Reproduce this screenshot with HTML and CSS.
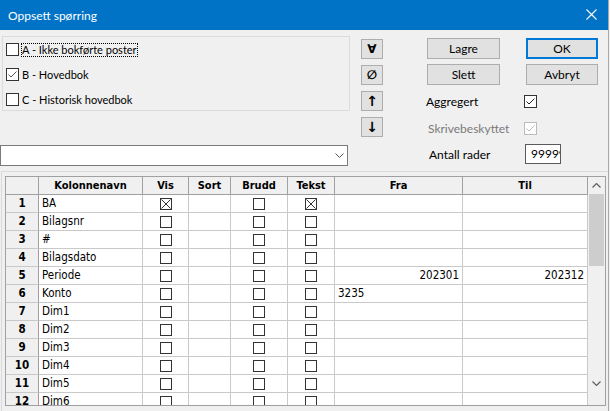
FILE: index.html
```html
<!DOCTYPE html>
<html lang="no">
<head>
<meta charset="utf-8">
<title>Oppsett spørring</title>
<link rel="stylesheet" href="styles.css">
</head>
<body>
<div class="window">
  <div class="titlebar">
    <span class="title">Oppsett spørring</span>
    <svg class="close" width="11" height="11" viewBox="0 0 11 11"><path d="M0.5 0.5 L10.5 10.5 M10.5 0.5 L0.5 10.5" stroke="#fff" stroke-width="1.1" fill="none"/></svg>
  </div>
  <div class="top">
    <div class="leftcol">
      <div class="group">
        <div class="cb-row"><span class="cb"></span><span class="cb-text focus">A - Ikke bokførte poster</span></div>
        <div class="cb-row"><span class="cb"><svg width="11" height="11" viewBox="0 0 11 11"><path d="M1.5 5.5 L4 8 L9.5 2.5" stroke="#555" stroke-width="1" fill="none"/></svg></span><span class="cb-text">B - Hovedbok</span></div>
        <div class="cb-row"><span class="cb"></span><span class="cb-text">C - Historisk hovedbok</span></div>
      </div>
      <div class="combo">
        <svg width="9" height="5" viewBox="0 0 9 5"><path d="M0.5 0.5 L4.5 4.5 L8.5 0.5" stroke="#555" stroke-width="1" fill="none"/></svg>
      </div>
    </div>
    <div class="tools">
      <button class="tool">∀</button>
      <button class="tool">∅</button>
      <button class="tool arrow">↑</button>
      <button class="tool arrow">↓</button>
    </div>
    <div class="rightcol">
      <div class="btn-grid">
        <button class="btn">Lagre</button>
        <button class="btn default">OK</button>
        <button class="btn">Slett</button>
        <button class="btn">Avbryt</button>
      </div>
      <div class="opt opt-agg"><span class="opt-label">Aggregert</span><span class="cb"><svg width="11" height="11" viewBox="0 0 11 11"><path d="M1.5 5.5 L4 8 L9.5 2.5" stroke="#222" stroke-width="1" fill="none"/></svg></span></div>
      <div class="opt opt-skr"><span class="opt-label disabled">Skrivebeskyttet</span><span class="cb cb-disabled"><svg width="11" height="11" viewBox="0 0 11 11"><path d="M1.5 5.5 L4 8 L9.5 2.5" stroke="#bcbcbc" stroke-width="1" fill="none"/></svg></span></div>
      <div class="opt opt-ant"><span class="opt-label ant">Antall rader</span><span class="input">99999</span></div>
    </div>
  </div>
  <div class="gridframe">
    <div class="grid">
      <div class="cells">
        <div class="row head">
          <div class="hc corner"></div><div class="hc">Kolonnenavn</div><div class="hc">Vis</div><div class="hc">Sort</div><div class="hc">Brudd</div><div class="hc">Tekst</div><div class="hc">Fra</div><div class="hc">Til</div>
        </div>
        <div class="row"><div class="rh">1</div><div class="c">BA</div><div class="c ck"><span class="gcb"><svg width="10" height="10" viewBox="0 0 10 10"><path d="M0.5 0.5 L9.5 9.5 M9.5 0.5 L0.5 9.5" stroke="#333" stroke-width="1" fill="none"/></svg></span></div><div class="c"></div><div class="c ck"><span class="gcb"></span></div><div class="c ck"><span class="gcb"><svg width="10" height="10" viewBox="0 0 10 10"><path d="M0.5 0.5 L9.5 9.5 M9.5 0.5 L0.5 9.5" stroke="#333" stroke-width="1" fill="none"/></svg></span></div><div class="c"></div><div class="c"></div></div>
        <div class="row"><div class="rh">2</div><div class="c">Bilagsnr</div><div class="c ck"><span class="gcb"></span></div><div class="c"></div><div class="c ck"><span class="gcb"></span></div><div class="c ck"><span class="gcb"></span></div><div class="c"></div><div class="c"></div></div>
        <div class="row"><div class="rh">3</div><div class="c">#</div><div class="c ck"><span class="gcb"></span></div><div class="c"></div><div class="c ck"><span class="gcb"></span></div><div class="c ck"><span class="gcb"></span></div><div class="c"></div><div class="c"></div></div>
        <div class="row"><div class="rh">4</div><div class="c">Bilagsdato</div><div class="c ck"><span class="gcb"></span></div><div class="c"></div><div class="c ck"><span class="gcb"></span></div><div class="c ck"><span class="gcb"></span></div><div class="c"></div><div class="c"></div></div>
        <div class="row"><div class="rh">5</div><div class="c">Periode</div><div class="c ck"><span class="gcb"></span></div><div class="c"></div><div class="c ck"><span class="gcb"></span></div><div class="c ck"><span class="gcb"></span></div><div class="c num">202301</div><div class="c num">202312</div></div>
        <div class="row"><div class="rh">6</div><div class="c">Konto</div><div class="c ck"><span class="gcb"></span></div><div class="c"></div><div class="c ck"><span class="gcb"></span></div><div class="c ck"><span class="gcb"></span></div><div class="c">3235</div><div class="c"></div></div>
        <div class="row"><div class="rh">7</div><div class="c">Dim1</div><div class="c ck"><span class="gcb"></span></div><div class="c"></div><div class="c ck"><span class="gcb"></span></div><div class="c ck"><span class="gcb"></span></div><div class="c"></div><div class="c"></div></div>
        <div class="row"><div class="rh">8</div><div class="c">Dim2</div><div class="c ck"><span class="gcb"></span></div><div class="c"></div><div class="c ck"><span class="gcb"></span></div><div class="c ck"><span class="gcb"></span></div><div class="c"></div><div class="c"></div></div>
        <div class="row"><div class="rh">9</div><div class="c">Dim3</div><div class="c ck"><span class="gcb"></span></div><div class="c"></div><div class="c ck"><span class="gcb"></span></div><div class="c ck"><span class="gcb"></span></div><div class="c"></div><div class="c"></div></div>
        <div class="row"><div class="rh">10</div><div class="c">Dim4</div><div class="c ck"><span class="gcb"></span></div><div class="c"></div><div class="c ck"><span class="gcb"></span></div><div class="c ck"><span class="gcb"></span></div><div class="c"></div><div class="c"></div></div>
        <div class="row"><div class="rh">11</div><div class="c">Dim5</div><div class="c ck"><span class="gcb"></span></div><div class="c"></div><div class="c ck"><span class="gcb"></span></div><div class="c ck"><span class="gcb"></span></div><div class="c"></div><div class="c"></div></div>
        <div class="row"><div class="rh">12</div><div class="c">Dim6</div><div class="c ck"><span class="gcb"></span></div><div class="c"></div><div class="c ck"><span class="gcb"></span></div><div class="c ck"><span class="gcb"></span></div><div class="c"></div><div class="c"></div></div>
      </div>
      <div class="scrollbar">
        <div class="sb-btn"><svg width="9" height="5" viewBox="0 0 9 5"><path d="M0.5 4.5 L4.5 0.5 L8.5 4.5" stroke="#606060" stroke-width="1.2" fill="none"/></svg></div>
        <div class="sb-track"><div class="sb-thumb"></div></div>
        <div class="sb-btn"><svg width="9" height="5" viewBox="0 0 9 5"><path d="M0.5 0.5 L4.5 4.5 L8.5 0.5" stroke="#606060" stroke-width="1.2" fill="none"/></svg></div>
        <div class="sb-corner"></div>
      </div>
    </div>
  </div>
</div>
</body>
</html>
```

FILE: styles.css
```css
* { box-sizing: border-box; }
html, body { margin: 0; padding: 0; background: #f0f0f0; }
body {
  width: 610px; height: 411px; overflow: hidden;
  font-family: Lato, "Liberation Sans", sans-serif;
  font-size: 11px; color: #000;
}
.window {
  width: 609px; height: 411px;
  border-right: 1px solid #a9a9a9;
  background: #f0f0f0;
  display: flex; flex-direction: column;
}
.titlebar {
  flex: none; height: 30px; background: #0173c6; color: #fff;
  display: flex; align-items: center; justify-content: space-between;
  padding: 0 11px 0 8px;
}
.title { font-size: 12px; }
.close { display: block; margin-top: -1px; }

.top { display: flex; flex: none; }
.leftcol { width: 350px; display: flex; flex-direction: column; }
.group {
  margin: 6px 0 0 2px; width: 348px; height: 75px;
  border: 1px solid #dcdcdc;
  padding: 6px 0 0 3px;
  display: flex; flex-direction: column; gap: 12px;
}
.cb-row { display: flex; align-items: center; height: 13px; }
.cb {
  width: 13px; height: 13px; border: 1px solid #333; background: #fff;
  flex: none; display: block;
}
.cb svg { display: block; }
.cb-disabled { border-color: #bcbcbc; }
.cb-text {
  margin-left: 2px; height: 14px; line-height: 12px;
  border: 1px solid transparent; padding: 0; white-space: nowrap;
}
.cb-text.focus { border: 1px dotted #000; }
.combo {
  margin-top: 34px; width: 348px; height: 21px;
  border: 1px solid #7a7a7a; background: #fff;
  display: flex; align-items: center; justify-content: flex-end;
  padding-right: 3px;
}
.combo svg { display: block; }

.tools {
  margin: 9px 0 0 11px; width: 22px;
  display: flex; flex-direction: column; gap: 6px;
}
.tool {
  width: 22px; height: 20px; padding: 0; margin: 0;
  border: 1px solid #adadad; background: #e1e1e1;
  font-family: "DejaVu Sans", sans-serif; font-weight: bold; font-size: 12px;
  color: #000; line-height: 18px; text-align: center;
}
.tool.arrow { font-size: 14px; }

.rightcol { margin-left: 43px; }
.btn-grid {
  margin: 8px 0 0 1px;
  display: grid; grid-template-columns: 73px 72px;
  column-gap: 26px; row-gap: 5px;
}
.btn {
  height: 21px; padding: 0; margin: 0;
  border: 1px solid #adadad; background: #e1e1e1;
  font-family: inherit; font-size: 12px; color: #000;
}
.btn.default { border: 2px solid #0078d7; }
.opt { display: flex; align-items: center; }
.opt-label { width: 98px; flex: none; white-space: nowrap; font-size: 12px; }
.opt-label.disabled { color: #7a7a7a; padding-left: 2px; }
.opt-label.ant { padding-left: 3px; width: 99px; }
.opt-agg { margin-top: 10px; height: 13px; }
.opt-skr { margin-top: 14px; height: 13px; }
.opt-ant { margin-top: 9px; height: 20px; }
.input {
  width: 36px; height: 20px; border: 1px solid #5a5a5a; background: #fff;
  overflow: hidden; white-space: nowrap; padding-left: 5px;
  font-size: 12px; line-height: 18px;
}

.gridframe {
  margin: 5px 0 0 1px; width: 607px; flex: 1;
  border-top: 1px solid #dadada; border-left: 1px solid #dadada;
  padding: 4px 0 0 3px;
}
.grid {
  width: 601px; height: 230px;
  border: 1px solid #a0a0a0; background: #fff;
  display: flex;
  font-family: "DejaVu Sans", sans-serif; font-stretch: condensed;
  font-size: 11.5px;
}
.cells { flex: 1; overflow: hidden; }
.row {
  display: grid;
  grid-template-columns: 33px 104px 46px 42px 57px 47px 128px 125px;
  height: 18px;
}
.row > div {
  border-right: 1px solid #c9c9c9; border-bottom: 1px solid #c9c9c9;
  height: 18px; line-height: 17px; white-space: nowrap; overflow: hidden;
}
.row.head > div {
  background: #f0f0f0; font-weight: bold; text-align: center;
  font-size: 11px;
  border-right-color: #a0a0a0; border-bottom-color: #a0a0a0;
}
.row > .rh {
  background: #f0f0f0; font-weight: bold; text-align: center;
  border-right-color: #a0a0a0;
}
.c { padding: 0 3px; }
.c.num { text-align: right; }
.c.ck { display: flex; align-items: center; justify-content: center; }
.gcb {
  width: 12px; height: 12px; border: 1px solid #333; background: #fff; display: block;
}
.gcb svg { display: block; }

.scrollbar {
  width: 17px; flex: none; background: #f0f0f0;
  display: flex; flex-direction: column;
}
.sb-btn { height: 17px; display: flex; align-items: center; justify-content: center; }
.sb-btn svg { display: block; }
.sb-track { flex: 1; padding: 0 1px; }
.sb-thumb { height: 72px; background: #cdcdcd; }
.sb-corner { height: 13px; }
```
